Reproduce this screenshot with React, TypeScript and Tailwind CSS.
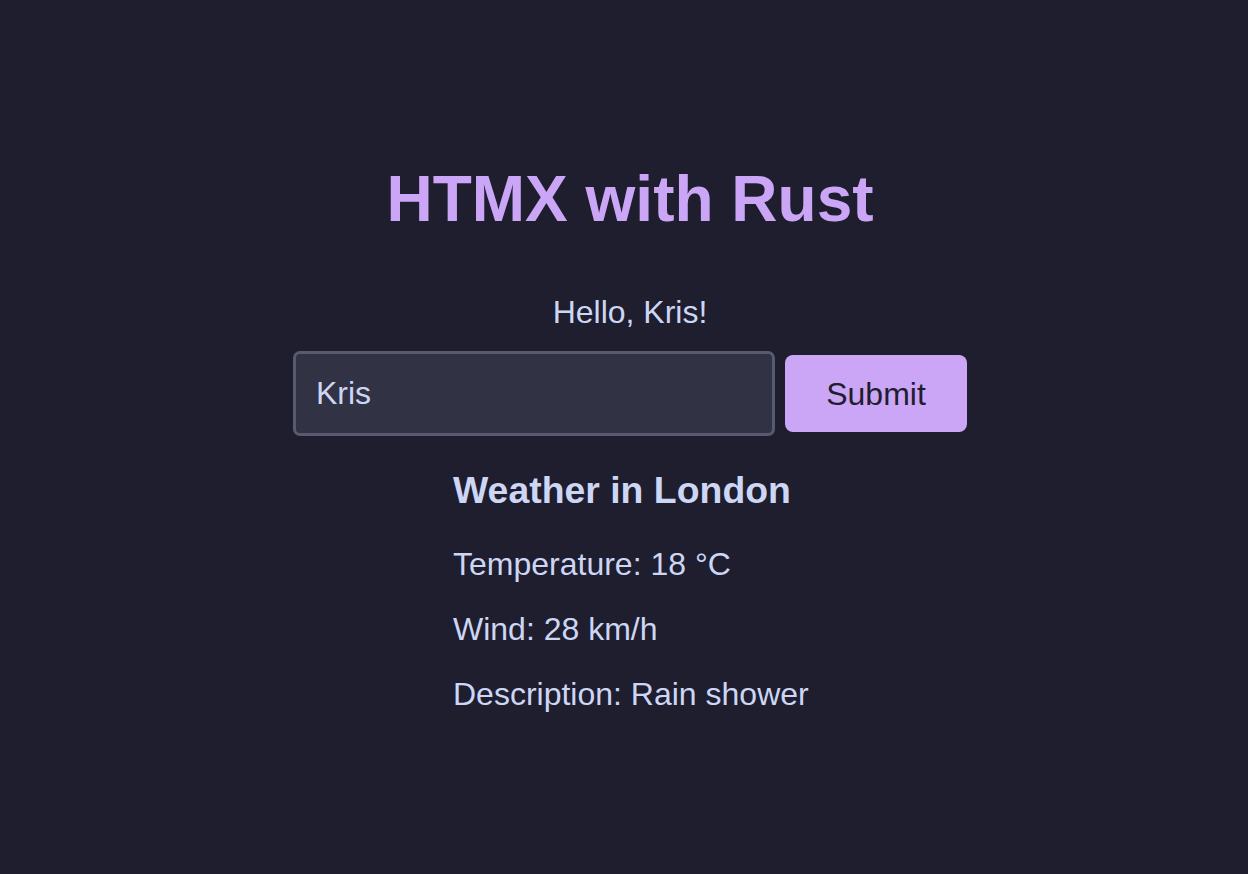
const weather = {
  city: "London",
  temperature: "18 °C",
  wind: "28 km/h",
  description: "Rain shower",
};

export default function App() {
  return (
    <main
      className="flex min-h-screen flex-col items-center bg-[#1e1e2e] pl-[12px] pt-[167px] text-[#cdd6f4]"
      style={{ fontFamily: '"Liberation Sans", Arial, sans-serif' }}
    >
      <h1 className="text-[64px] font-bold leading-none text-[#cba6f7]">HTMX with Rust</h1>

      <p className="mt-[65px] text-[32px] leading-none">Hello, Kris!</p>

      <form className="mt-[23px] flex items-center gap-[10px]" onSubmit={(e) => e.preventDefault()}>
        <input
          type="text"
          defaultValue="Kris"
          className="h-[85px] w-[482px] rounded-[7px] border-[3px] border-[#585b70] bg-[#313244] pl-[20px] text-[32px] text-[#cdd6f4] outline-none"
        />
        <button
          type="submit"
          className="h-[77px] w-[182px] rounded-[8px] bg-[#cba6f7] text-[32px] text-[#1e1e2e]"
        >
          Submit
        </button>
      </form>

      <div className="mt-[36px] w-[354px] whitespace-nowrap">
        <h2 className="text-[37.4px] font-bold leading-none">Weather in {weather.city}</h2>
        <p className="mt-[39px] text-[32px] leading-none">Temperature: {weather.temperature}</p>
        <p className="mt-[33px] text-[32px] leading-none">Wind: {weather.wind}</p>
        <p className="mt-[33px] text-[32px] leading-none">Description: {weather.description}</p>
      </div>
    </main>
  );
}
